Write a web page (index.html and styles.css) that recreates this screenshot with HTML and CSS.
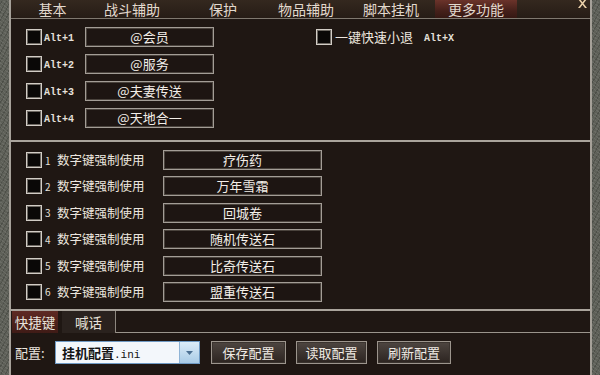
FILE: index.html
```html
<!DOCTYPE html>
<html lang="zh">
<head>
<meta charset="utf-8">
<link rel="stylesheet" href="styles.css">
</head>
<body>
<div class="window">
  <div class="frame">
    <div class="tabbar">
      <div class="tab t1">基本</div>
      <div class="tab t2">战斗辅助</div>
      <div class="tab t3">保护</div>
      <div class="tab t4">物品辅助</div>
      <div class="tab t5">脚本挂机</div>
      <div class="tab t6 active">更多功能</div>
      <svg class="close" viewBox="0 0 11 10" width="11" height="10">
        <path d="M1 0 L4.5 4.5 L1 9 L3 9 L5.5 5.8 L8 9 L10 9 L6.5 4.5 L10 0 L8 0 L5.5 3.2 L3 0 Z" fill="#e9cfa8"/>
      </svg>
    </div>

    <div class="sec1">
      <div class="col">
        <div class="row"><span class="cb"></span><span class="alt">Alt+1</span><span class="field f1">@会员</span></div>
        <div class="row"><span class="cb"></span><span class="alt">Alt+2</span><span class="field f1">@服务</span></div>
        <div class="row"><span class="cb"></span><span class="alt">Alt+3</span><span class="field f1">@夫妻传送</span></div>
        <div class="row"><span class="cb"></span><span class="alt">Alt+4</span><span class="field f1">@天地合一</span></div>
      </div>
      <div class="quick">
        <span class="cb"></span><span class="qtext">一键快速小退</span><span class="alt altx">Alt+X</span>
      </div>
    </div>

    <div class="sec2">
      <div class="row"><span class="cb"></span><span class="numlabel"><span class="num">1</span><span class="ntext">数字键强制使用</span></span><span class="field f2">疗伤药</span></div>
      <div class="row"><span class="cb"></span><span class="numlabel"><span class="num">2</span><span class="ntext">数字键强制使用</span></span><span class="field f2">万年雪霜</span></div>
      <div class="row"><span class="cb"></span><span class="numlabel"><span class="num">3</span><span class="ntext">数字键强制使用</span></span><span class="field f2">回城卷</span></div>
      <div class="row"><span class="cb"></span><span class="numlabel"><span class="num">4</span><span class="ntext">数字键强制使用</span></span><span class="field f2">随机传送石</span></div>
      <div class="row"><span class="cb"></span><span class="numlabel"><span class="num">5</span><span class="ntext">数字键强制使用</span></span><span class="field f2">比奇传送石</span></div>
      <div class="row"><span class="cb"></span><span class="numlabel"><span class="num">6</span><span class="ntext">数字键强制使用</span></span><span class="field f2">盟重传送石</span></div>
    </div>

    <div class="subtabs">
      <div class="stab s1 active">快捷键</div>
      <div class="stab s2">喊话</div>
      <div class="stabfill"></div>
    </div>

    <div class="bottom">
      <span class="cfg">配置:</span>
      <div class="combo">
        <span class="ctext">挂机配置<span class="ext">.ini</span></span>
        <span class="drop"><svg viewBox="0 0 7 4" width="7" height="4"><path d="M0 0 L7 0 L3.5 4 Z" fill="#4b6f92"/></svg></span>
      </div>
      <div class="btn b1">保存配置</div>
      <div class="btn b2">读取配置</div>
      <div class="btn b3">刷新配置</div>
    </div>
  </div>
</div>
</body>
</html>
```

FILE: styles.css
```css
html, body {
  margin: 0;
  padding: 0;
  background: #1f1713;
}

body {
  font-family: "Noto Sans CJK SC", "Noto Sans", sans-serif;
  color: #e6e0d9;
}

.window {
  width: 600px;
  height: 375px;
  box-sizing: border-box;
  padding: 0 8px 0 9px;
  background-color: #5e6058;
  background-image:
    repeating-linear-gradient(37deg, rgba(255,255,255,0.08) 0 1px, transparent 1px 3px),
    repeating-linear-gradient(-61deg, rgba(0,0,0,0.18) 0 1px, transparent 1px 4px);
}

.frame {
  height: 375px;
  box-sizing: border-box;
  border-left: 2px solid #a6a199;
  border-right: 2px solid #a6a199;
  background: #1f1713;
  display: flex;
  flex-direction: column;
}

/* top tabs */
.tabbar {
  position: relative;
  height: 18px;
  border-bottom: 1px solid #7f786f;
  background: linear-gradient(#34281f, #261c16);
  display: flex;
  padding-left: 11px;
}

.tab {
  height: 18px;
  line-height: 18px;
  font-size: 14px;
  text-align: center;
  color: #e2d9ce;
}

.t1 { width: 61px; }
.t2 { width: 98px; }
.t3 { width: 84px; }
.t4 { width: 82px; }
.t5 { width: 88px; }
.t6 { width: 82px; }

.tab.active {
  background: linear-gradient(#6b332a, #45201a 60%, #351813);
}

.close {
  position: absolute;
  right: 2px;
  top: -1px;
}

/* section 1 */
.sec1 {
  height: 123px;
  box-sizing: border-box;
  padding: 8px 0 0 15px;
  display: flex;
  align-items: flex-start;
  border-bottom: 2px solid #aaa49c;
}

.col {
  display: flex;
  flex-direction: column;
  gap: 7px;
}

.row {
  height: 20px;
  display: flex;
  align-items: center;
}

.cb {
  width: 16px;
  height: 16px;
  box-sizing: border-box;
  border: 1px solid #d2cdc6;
  box-shadow: inset 0 0 0 1px #6d6862;
  background: #0a0807;
  flex: none;
}

.alt {
  font-family: "Liberation Mono", "DejaVu Sans Mono", monospace;
  font-size: 10px;
  font-weight: bold;
  color: #e6e1db;
  width: 41px;
  margin-left: 2px;
  height: 20px;
  line-height: 23px;
}

.field {
  height: 20px;
  box-sizing: border-box;
  border: 1px solid #a39d96;
  box-shadow: inset 0 0 0 1px #4a433d;
  background: #1d1512;
  font-size: 13px;
  line-height: 18px;
  text-align: center;
  color: #f3eee8;
  flex: none;
}

.f1 { width: 129px; }
.f2 { width: 159px; }

.quick {
  height: 20px;
  display: flex;
  align-items: center;
  margin-left: 102px;
}

.qtext {
  font-size: 13px;
  margin-left: 3px;
  line-height: 20px;
  width: 78px;
  color: #ece6df;
}

.altx {
  margin-left: 11px;
  width: auto;
}

/* section 2 */
.sec2 {
  height: 169px;
  box-sizing: border-box;
  padding: 8px 0 0 15px;
  display: flex;
  flex-direction: column;
  gap: 6.4px;
  border-bottom: 2px solid #aaa49c;
}

.numlabel {
  width: 121px;
  display: flex;
  align-items: center;
  flex: none;
}

.num {
  width: 12px;
  padding-left: 3px;
  font-size: 10px;
  color: #e6e1db;
}

.ntext {
  font-size: 12.5px;
  line-height: 20px;
  white-space: nowrap;
  color: #ece6df;
}

/* sub tabs */
.subtabs {
  height: 22px;
  display: flex;
  padding-left: 1px;
}

.stab {
  height: 22px;
  line-height: 22px;
  font-size: 13.5px;
  text-align: center;
  color: #e8e2da;
}

.s1 {
  width: 46px;
  background: linear-gradient(#5e2a23, #3f1b16);
}

.s2 {
  width: 53px;
  margin-left: 4px;
  background: #2a221e;
  border-right: 1px solid #8d877f;
}

.stabfill {
  flex: 1;
  border-bottom: 1px solid #9a948c;
  box-sizing: border-box;
}

/* bottom */
.bottom {
  flex: 1;
  display: flex;
  align-items: flex-start;
  padding: 8px 0 0 4px;
}

.cfg {
  width: 40px;
  height: 23px;
  line-height: 23px;
  font-size: 13px;
  color: #ece6df;
}

.combo {
  width: 145px;
  height: 23px;
  box-sizing: border-box;
  border: 1px solid #6f9ac4;
  background: #f3f7fb;
  display: flex;
}

.ctext {
  flex: 1;
  padding-left: 6px;
  font-size: 13px;
  line-height: 21px;
  color: #141414;
  font-weight: bold;
}

.ext {
  font-family: "Liberation Mono", monospace;
  font-size: 11px;
  font-weight: normal;
}

.drop {
  width: 19px;
  border-left: 1px solid #8fb4d6;
  background: linear-gradient(#dcecf8, #a9cbe6);
  display: flex;
  align-items: center;
  justify-content: center;
}

.btn {
  height: 23px;
  box-sizing: border-box;
  border: 1px solid #9c958d;
  box-shadow: inset 0 0 0 1px #3a332e;
  background: linear-gradient(#4e4641, #2c2420);
  font-size: 13px;
  line-height: 21px;
  text-align: center;
  color: #f0ebe5;
}

.b1 { width: 75px; margin-left: 11px; }
.b2 { width: 71px; margin-left: 10px; }
.b3 { width: 74px; margin-left: 10px; }
```
